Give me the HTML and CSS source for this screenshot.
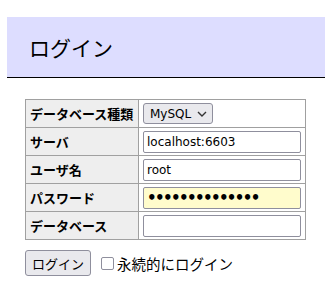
FILE: index.html
```html
<!DOCTYPE html>
<html lang="ja">
<head>
<meta charset="utf-8">
<link rel="stylesheet" href="styles.css">
</head>
<body>
<h1 class="title">ログイン</h1>
<form class="form">
<table class="tbl">
<tr><th>データベース種類</th><td><span class="select">MySQL <svg width="10" height="6" viewBox="0 0 10 6"><path d="M1 1l4 4 4-4" fill="none" stroke="#333" stroke-width="1.4"/></svg></span></td></tr>
<tr><th>サーバ</th><td><input class="inp" type="text" value="localhost:6603"></td></tr>
<tr><th>ユーザ名</th><td><input class="inp" type="text" value="root"></td></tr>
<tr><th>パスワード</th><td><input class="inp pw" type="password" value="aaaaaaaaaaaaaa"></td></tr>
<tr><th>データベース</th><td><input class="inp" type="text" value=""></td></tr>
</table>
<div class="actions">
<button class="btn" type="button">ログイン</button>
<label class="chk"><span class="box"></span>永続的にログイン</label>
</div>
</form>
</body>
</html>
```
FILE: styles.css
```css
html, body { margin: 0; padding: 0; background: #fff; }
body {
  padding: 17px 7px 0 7px;
  font-family: "Noto Sans CJK JP", "Noto Sans", sans-serif;
  font-size: 13px;
  color: #000;
}
.title {
  margin: 0;
  height: 61px;
  box-sizing: border-box;
  background: #ddddff;
  border-bottom: 1px solid #000;
  padding: 0 0 0 22px;
  font-size: 21px;
  font-weight: normal;
  line-height: 60px;
}
.form { padding: 21px 0 0 18px; }
.tbl {
  border-collapse: collapse;
  width: 281px;
}
.tbl th, .tbl td {
  border: 1px solid #a0a0a0;
  height: 28px;
  padding: 0 4px;
  box-sizing: border-box;
}
.tbl th {
  background: #eeeeee;
  text-align: left;
  font-weight: bold;
  width: 113px;
  padding: 0 4px;
  white-space: nowrap;
  font-size: 13px;
}
.tbl td { padding: 0 4px; }
.inp {
  display: block;
  box-sizing: border-box;
  width: 158px;
  height: 22px;
  margin: 0;
  padding: 0 3px;
  border: 1px solid #8f8f9d;
  border-radius: 2px;
  font-family: "DejaVu Sans", sans-serif;
  font-size: 12px;
  background: #fff;
  color: #000;
}
.pw {
  background: #fffccc;
  font-size: 15px;
  font-weight: bold;
  letter-spacing: -1.6px;
}
.select {
  display: inline-flex;
  align-items: center;
  gap: 6px;
  box-sizing: border-box;
  height: 21px;
  padding: 0 5px 0 6px;
  border: 1px solid #8f8f9d;
  border-radius: 3px;
  background: #e9e9ed;
  font-family: "DejaVu Sans", sans-serif;
  font-size: 12px;
}
.actions {
  display: flex;
  align-items: center;
  gap: 10px;
  margin-top: 10px;
}
.btn {
  box-sizing: border-box;
  height: 26px;
  padding: 0 6px;
  margin: 0;
  border: 1px solid #8f8f9d;
  border-radius: 3px;
  background: #e9e9ed;
  font-family: "Noto Sans CJK JP", sans-serif;
  font-size: 13px;
  color: #000;
}
.chk {
  display: flex;
  align-items: center;
  gap: 3px;
  font-size: 14.5px;
}
.box {
  display: inline-block;
  width: 11px;
  height: 11px;
  border: 1px solid #8f8f9d;
  border-radius: 2px;
  background: #fff;
}
```
